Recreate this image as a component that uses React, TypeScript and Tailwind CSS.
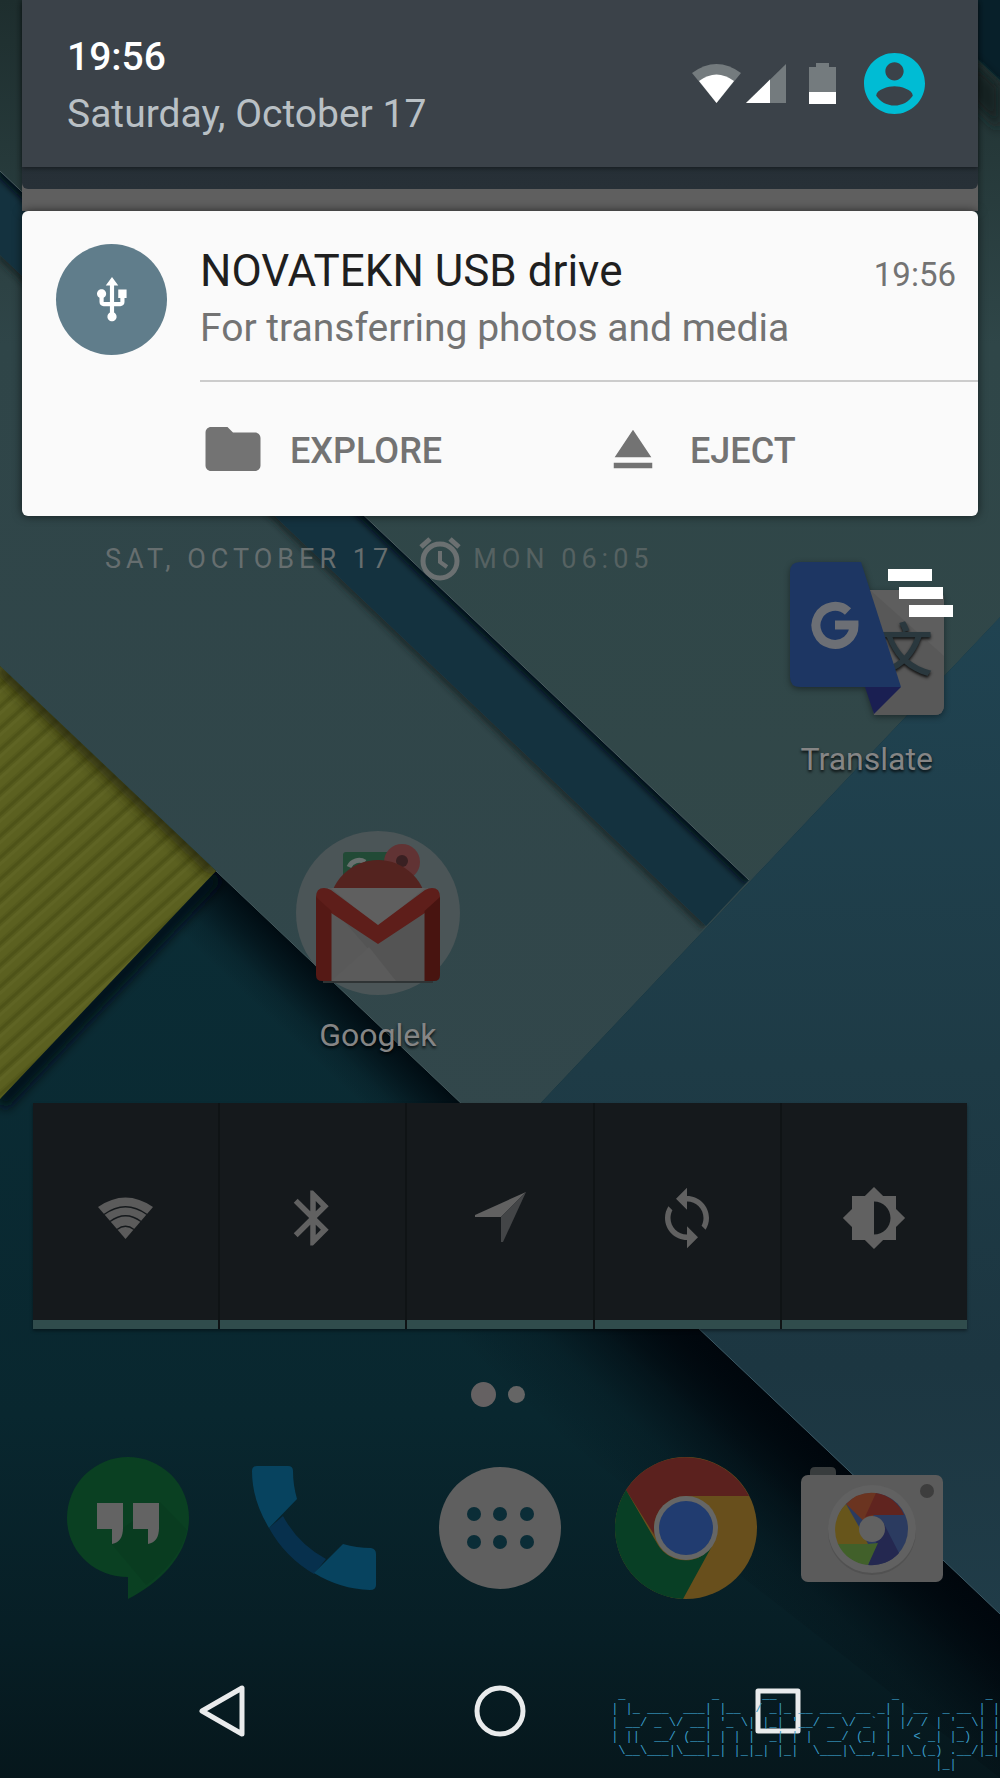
import React from "react";

const SYNC =
  "M12 4V1L8 5l4 4V6c3.31 0 6 2.69 6 6 0 1.01-.25 1.97-.7 2.8l1.46 1.46C19.54 15.03 20 13.57 20 12c0-4.42-3.58-8-8-8zm0 14c-3.31 0-6-2.69-6-6 0-1.01.25-1.97.7-2.8L5.24 7.74C4.46 8.97 4 10.43 4 12c0 4.42 3.58 8 8 8v3l4-4-4-4v3z";
const BRIGHTNESS =
  "M20 15.31L23.31 12 20 8.69V4h-4.69L12 .69 8.69 4H4v4.69L.69 12 4 15.31V20h4.69L12 23.31 15.31 20H20v-4.69zM12 18V6c3.31 0 6 2.69 6 6s-2.69 6-6 6z";
const BLUETOOTH =
  "M17.71 7.71L12 2h-1v7.59L6.41 5 5 6.41 10.59 12 5 17.59 6.41 19 11 14.41V22h1l5.71-5.71-4.3-4.29 4.3-4.29zM13 5.83l1.88 1.88L13 9.59V5.83zm1.88 10.46L13 18.17v-3.76l1.88 1.88z";
const FOLDER =
  "M10 4H4c-1.1 0-1.99.9-1.99 2L2 18c0 1.1.9 2 2 2h16c1.1 0 2-.9 2-2V8c0-1.1-.9-2-2-2h-8l-2-2z";
const EJECT = "M5 17h14v2H5zm7-12L5.33 15h13.34z";
const ACCOUNT =
  "M12 2C6.48 2 2 6.48 2 12s4.48 10 10 10 10-4.48 10-10S17.52 2 12 2zm0 3c1.66 0 3 1.34 3 3s-1.34 3-3 3-3-1.34-3-3 1.34-3 3-3zm0 14.2c-2.5 0-4.71-1.28-6-3.22.03-1.99 4-3.08 6-3.08 1.99 0 5.97 1.09 6 3.08-1.29 1.94-3.5 3.22-6 3.22z";
const USB =
  "M15 7v4h1v2h-3V5h2l-3-4-3 4h2v8H8v-2.07c.7-.37 1.2-1.08 1.2-1.93 0-1.21-.99-2.2-2.2-2.2-1.21 0-2.2.99-2.2 2.2 0 .85.5 1.56 1.2 1.93V13c0 1.11.89 2 2 2h3v3.05c-.71.37-1.2 1.1-1.2 1.95 0 1.22.99 2.2 2.2 2.2 1.21 0 2.2-.98 2.2-2.2 0-.85-.49-1.58-1.2-1.95V15h3c1.11 0 2-.89 2-2v-2h1V7h-4z";

const BANNER = [
  " _            _      __                _            _ ",
  "| |_ ___  ___| |__  / _|_ __ ___  __ _| | __  _ __ | |",
  "| __/ _ \\/ __| '_ \\| |_| '__/ _ \\/ _` | |/ / | '_ \\| |",
  "| ||  __/ (__| | | |  _| | |  __/ (_| |   < _| |_) | |",
  " \\__\\___|\\___|_| |_|_| |_|  \\___|\\__,_|_|\\_(_) .__/|_|",
  "                                             |_|      ",
].join("\n");

function Wallpaper() {
  return (
    <svg
      className="absolute inset-0 h-full w-full"
      viewBox="0 0 1000 1778"
      preserveAspectRatio="xMidYMid slice"
      aria-hidden="true"
    >
      <defs>
        <linearGradient id="deep" x1="0" y1="870" x2="0" y2="1778" gradientUnits="userSpaceOnUse">
          <stop offset="0" stopColor="#0b2d36" />
          <stop offset="0.6" stopColor="#09272f" />
          <stop offset="0.85" stopColor="#071e25" />
          <stop offset="1" stopColor="#06171c" />
        </linearGradient>
        <linearGradient id="paper" x1="0" y1="0" x2="0" y2="1150" gradientUnits="userSpaceOnUse">
          <stop offset="0" stopColor="#1e2e2e" />
          <stop offset="0.14" stopColor="#293c3c" />
          <stop offset="0.3" stopColor="#2f4548" />
          <stop offset="1" stopColor="#32474b" />
        </linearGradient>
        <linearGradient id="paperRight" x1="0" y1="0" x2="0" y2="1150" gradientUnits="userSpaceOnUse">
          <stop offset="0" stopColor="#1e2e2e" />
          <stop offset="0.3" stopColor="#2f4648" />
          <stop offset="1" stopColor="#334849" />
        </linearGradient>
        <linearGradient id="sea" x1="0" y1="617" x2="0" y2="1614" gradientUnits="userSpaceOnUse">
          <stop offset="0" stopColor="#204351" />
          <stop offset="0.45" stopColor="#1e3b46" />
          <stop offset="0.75" stopColor="#1c3641" />
          <stop offset="1" stopColor="#203c48" />
        </linearGradient>
        <linearGradient id="fadeNarrow" x1="463" y1="1104" x2="415" y2="1155" gradientUnits="userSpaceOnUse">
          <stop offset="0" stopColor="#000a10" stopOpacity="0.95" />
          <stop offset="0.35" stopColor="#000a10" stopOpacity="0.6" />
          <stop offset="0.7" stopColor="#000a10" stopOpacity="0.18" />
          <stop offset="1" stopColor="#000a10" stopOpacity="0" />
        </linearGradient>
        <linearGradient id="fadeWide" x1="463" y1="1104" x2="342" y2="1232" gradientUnits="userSpaceOnUse">
          <stop offset="0" stopColor="#00060c" stopOpacity="0.95" />
          <stop offset="0.3" stopColor="#00060c" stopOpacity="0.7" />
          <stop offset="0.65" stopColor="#00060c" stopOpacity="0.2" />
          <stop offset="1" stopColor="#00060c" stopOpacity="0" />
        </linearGradient>
        <pattern
          id="ribs"
          width="400"
          height="16"
          patternUnits="userSpaceOnUse"
          patternTransform="translate(0 1099) rotate(-42)"
        >
          <rect width="400" height="16" fill="#5b6020" />
          <rect y="0" width="400" height="3" fill="#5f6424" />
          <rect y="9" width="400" height="2" fill="#565b1d" />
          <rect y="11" width="400" height="3" fill="#4e5318" />
          <rect y="14" width="400" height="2" fill="#565b1d" />
        </pattern>
        <clipPath id="deepClip">
          <path d="M0 666L1000 1614V1778H0z" />
        </clipPath>
        <clipPath id="yellowClip">
          <path d="M0 666L216 871L0 1099z" />
        </clipPath>
        <clipPath id="bandClip">
          <path d="M0 171L749 880L706 926L0 255z" />
        </clipPath>
        <clipPath id="lowerPaperClip">
          <path d="M0 255L706 926L503 1143L0 666z" />
        </clipPath>
        <filter id="softSmall" x="-20%" y="-20%" width="140%" height="140%">
          <feGaussianBlur stdDeviation="6" />
        </filter>
        <filter id="softEdge" x="-20%" y="-20%" width="140%" height="140%">
          <feGaussianBlur stdDeviation="3" />
        </filter>
      </defs>
      <rect width="1000" height="1778" fill="url(#deep)" />
      <g clipPath="url(#deepClip)">
        <path d="M120 780L1000 1614V1778H120z" fill="url(#fadeNarrow)" />
        <path d="M540 1178L1000 1614V1778L400 1310z" fill="url(#fadeWide)" />
        <path d="M0 1104L216 876" stroke="#020f14" strokeWidth="16" filter="url(#softSmall)" />
      </g>
      <path d="M0 0H1000V617L503 1143L0 666z" fill="url(#paper)" />
      <path d="M0 171V0H1000V617L749 880z" fill="url(#paperRight)" />
      <g clipPath="url(#lowerPaperClip)">
        <path d="M0 255L706 926" stroke="#182424" strokeWidth="8" opacity="0.8" filter="url(#softEdge)" />
      </g>
      <path d="M0 171L749 880L706 926L0 255z" fill="#14323f" />
      <g clipPath="url(#bandClip)">
        <path d="M0 171L749 880" stroke="#020c12" strokeWidth="10" filter="url(#softEdge)" />
      </g>
      <path d="M0 171L749 880" stroke="#4c5d60" strokeWidth="1" />
      <path d="M1000 617L503 1143L1000 1614z" fill="url(#sea)" />
      <path d="M503 1143L1000 1614" stroke="#3c5864" strokeWidth="1" />
      <path d="M216 871L503 1143" stroke="#46595c" strokeWidth="1" />
      <path d="M0 666L216 871L0 1099z" fill="url(#ribs)" />
      <g clipPath="url(#yellowClip)">
        <path d="M0 666L216 871" stroke="#252708" strokeWidth="16" opacity="0.8" filter="url(#softSmall)" />
      </g>
      <path d="M970 0H1000V80L970 52z" fill="#08202a" />
      <path d="M970 58L1000 86V130L970 100z" fill="#142424" filter="url(#softSmall)" />
    </svg>
  );
}

function StatusIcons() {
  return (
    <div className="flex items-center">
      <svg className="h-10 w-[49px]" viewBox="0 0 49 40" role="img" aria-label="Wi-Fi">
        <path d="M0 9Q24.500 -9 49 9L24.500 39z" fill="#747b7e" />
        <path d="M7 17Q24.500 4 42 17L24.500 39z" fill="#fff" />
      </svg>
      <svg className="ml-[5px] h-10 w-10" viewBox="0 0 40 40" role="img" aria-label="Mobile signal">
        <path d="M40 0V39H0z" fill="#747b7e" />
        <path d="M24 15.600V39H0z" fill="#fff" />
      </svg>
      <svg className="ml-[23px] h-[41px] w-[27px]" viewBox="0 0 27 41" role="img" aria-label="Battery">
        <path d="M7 0H20V4H27V41H0V4H7z" fill="#747b7e" />
        <path d="M0 29H27V41H0z" fill="#fff" />
      </svg>
      <button type="button" aria-label="User profile" className="ml-7">
        <svg className="size-[61px]" viewBox="2 2 20 20" fill="#00bcd4">
          <path d={ACCOUNT} />
        </svg>
      </button>
    </div>
  );
}

function NotificationAction({ path, label }: { path: string; label: string }) {
  return (
    <button type="button" className="flex flex-1 items-center gap-6 text-[36px] leading-10 font-medium text-[#737373]">
      <svg className="size-[66px]" viewBox="0 0 24 24" fill="currentColor" aria-hidden="true">
        <path d={path} />
      </svg>
      <span className="pt-1">{label}</span>
    </button>
  );
}

function Shade() {
  return (
    <section className="relative z-10 mx-[22px]" aria-label="Notifications">
      <div className="bg-[#5f5f5f] pb-[22px] shadow-[0_0_8px_rgba(0,0,0,0.5)]">
        <div className="rounded-b-md bg-linear-to-b from-[#202a31] to-[#273037] pb-[22px]">
          <header className="flex h-[167px] items-center justify-between bg-[#3b4249] pr-[53px] pl-[45px] shadow-[0_2px_4px_rgba(0,0,0,0.35)]">
            <div className="pt-1">
              <div className="text-[39px] leading-[56px] font-medium text-white">19:56</div>
              <div className="text-[39px] leading-[58px] text-[#b9c0c5]">Saturday, October 17</div>
            </div>
            <StatusIcons />
          </header>
        </div>
      </div>
      <article className="flex h-[305px] rounded-md bg-[#fafafa] shadow-[0_0_10px_rgba(0,0,0,0.6)]">
        <div className="w-[178px] shrink-0 pt-[33px] pl-[34px]">
          <div className="flex size-[111px] items-center justify-center rounded-full bg-[#607d8b]">
            <svg className="size-[50px]" viewBox="0 0 24 24" fill="#fff" aria-hidden="true">
              <path d={USB} />
            </svg>
          </div>
        </div>
        <div className="flex min-w-0 flex-1 flex-col">
          <div className="flex h-[171px] flex-col border-b-2 border-[#cccccc] pt-8 pr-[22px]">
            <div className="flex items-baseline justify-between">
              <h1 className="text-[44px] leading-[56px] text-[#1f1f1f]">NOVATEKN USB drive</h1>
              <time className="text-[33px] leading-[56px] text-[#737373]">19:56</time>
            </div>
            <p className="text-[39px] leading-[50px] text-[#737373]">For transferring photos and media</p>
          </div>
          <div className="flex flex-1 items-center gap-[22px]">
            <NotificationAction path={FOLDER} label="EXPLORE" />
            <NotificationAction path={EJECT} label="EJECT" />
          </div>
        </div>
      </article>
    </section>
  );
}

function TranslateIcon() {
  return (
    <svg className="h-[158px] w-[154px] drop-shadow-[0_2px_3px_rgba(0,0,0,0.4)]" viewBox="0 0 154 158" aria-hidden="true">
      <path d="M70 29H144Q154 29 154 39V144Q154 154 144 154H84z" fill="#5e5e5e" />
      <path d="M80 29L154 95V144Q154 154 144 154H84z" fill="#585858" />
      <text x="85" y="110" fontSize="58" fontWeight="500" fill="#2a383e" fontFamily="'Noto Sans CJK SC', sans-serif">
        文
      </text>
      <path d="M10 1H71L111 126H10Q0 126 0 116V11Q0 1 10 1z" fill="#1d3663" />
      <path d="M75 126H111L84 153z" fill="#1a1f52" />
      <path d="M58 50.500A19 19 0 1 0 64 64H45" fill="none" stroke="#6c6f75" strokeWidth="9" />
    </svg>
  );
}

function FolderIcon() {
  return (
    <svg className="h-[164px] w-[164px]" viewBox="1 0 164 164" aria-hidden="true">
      <circle cx="83" cy="82" r="82" fill="#4b5557" />
      <rect x="48" y="21" width="60" height="50" rx="3" fill="#224a36" />
      <path d="M54 36A11 11 0 0 1 70 31" fill="none" stroke="#68706e" strokeWidth="5" />
      <circle cx="107" cy="31" r="18" fill="#613334" />
      <circle cx="107" cy="30" r="6" fill="#392022" />
      <circle cx="83" cy="78" r="49" fill="#54231f" />
      <path d="M33 57H133V150H33z" fill="#595959" />
      <path d="M36 75L83 113L130 75V150H101z" fill="#545454" />
      <path d="M36 150L74 116L101 150z" fill="#5b5b5b" />
      <path d="M36 57H130L83 96z" fill="#5f5f5f" />
      <path d="M21 66Q21 57 29 57Q32 57 36 59L83 94L130 59Q134 57 137 57Q145 57 145 66V72L83 113L21 72z" fill="#5e1e1a" />
      <path d="M21 66L36.500 80V150H27Q21 150 21 144z" fill="#551915" />
      <path d="M145 66L129.500 80V150H139Q145 150 145 144z" fill="#481410" />
      <path d="M28 151H138" stroke="#2f3435" strokeWidth="2" />
    </svg>
  );
}

function AppShortcut({ label, children, className }: { label: string; children: React.ReactNode; className: string }) {
  return (
    <div className={className}>
      <button
        type="button"
        className="flex flex-col items-center text-[32px] leading-10 text-[#858585] [text-shadow:0_2px_3px_rgba(0,0,0,0.8)]"
      >
        {children}
        <span className="mt-5">{label}</span>
      </button>
    </div>
  );
}

function AlarmIcon() {
  return (
    <svg className="mr-3 ml-[26px] h-[44px] w-[42px]" viewBox="0 0 42 44" fill="none" stroke="#6b7071" aria-hidden="true">
      <circle cx="21" cy="24" r="17" strokeWidth="5" />
      <path d="M21 14V25L28 30" strokeWidth="4" />
      <path d="M2 10L11 2M40 10L31 2" strokeWidth="5" />
    </svg>
  );
}

function HomeScreen() {
  return (
    <section className="relative px-[11px]" aria-label="Home screen">
      <div className="grid grid-cols-4">
        <div className="col-span-3 flex items-center self-start pt-[21px] pl-[94px] text-[27px] leading-[42px] tracking-[5px] whitespace-nowrap text-[#666e6f]">
          <span>SAT, OCTOBER 17</span>
          <AlarmIcon />
          <span className="text-[#566262]">MON 06:05</span>
        </div>
        <AppShortcut label="Translate" className="flex h-[315px] justify-center pt-[45px]">
          <TranslateIcon />
        </AppShortcut>
        <AppShortcut label="Googlek" className="col-start-2 flex h-[272px] justify-center">
          <FolderIcon />
        </AppShortcut>
      </div>
      <button type="button" aria-label="Clear all notifications" className="absolute top-[53px] right-[47px] z-10">
        <svg className="h-12 w-[65px]" viewBox="0 0 65 48" fill="#fff">
          <path d="M0 0H44V12H0zM11 18H55V30H11zM21 36H65V48H21z" />
        </svg>
      </button>
    </section>
  );
}

function WidgetWifi() {
  return (
    <svg className="h-[42px] w-[55px]" viewBox="0 0 55 42" aria-hidden="true">
      <path d="M0 10Q27.500 -9 55 10L27.500 42z" fill="#5b5b5b" />
      <path
        d="M6 17.500Q27.500 2 49 17.500M12 24.500Q27.500 13 43 24.500M19 32.500Q27.500 26 36 32.500"
        fill="none"
        stroke="#15191c"
        strokeWidth="1.500"
      />
    </svg>
  );
}

function WidgetLocation() {
  return (
    <svg className="h-[52px] w-[52px]" viewBox="0 0 52 52" aria-hidden="true">
      <path d="M52 0L1 23V25H27z" fill="#616161" />
      <path d="M52 0L27 25V50H29z" fill="#434547" />
    </svg>
  );
}

function MaterialIcon({ path }: { path: string }) {
  return (
    <svg className="size-[66px]" viewBox="0 0 24 24" fill="#616161" aria-hidden="true">
      <path d={path} />
    </svg>
  );
}

function PowerWidget() {
  const toggles = [
    { label: "Wi-Fi", icon: <WidgetWifi /> },
    { label: "Bluetooth", icon: <MaterialIcon path={BLUETOOTH} /> },
    { label: "Location", icon: <WidgetLocation /> },
    { label: "Sync", icon: <MaterialIcon path={SYNC} /> },
    { label: "Brightness", icon: <MaterialIcon path={BRIGHTNESS} /> },
  ];
  return (
    <section
      className="relative mx-[33px] grid h-[226px] grid-cols-5 gap-[2px] bg-[#0f1315] shadow-[0_2px_3px_rgba(0,0,0,0.4)]"
      aria-label="Power controls"
    >
      {toggles.map((t) => (
        <button
          key={t.label}
          type="button"
          aria-label={t.label}
          className="flex items-center justify-center border-b-[9px] border-[#304c4c] bg-[#15191c] pt-3"
        >
          {t.icon}
        </button>
      ))}
    </section>
  );
}

function HangoutsIcon() {
  return (
    <svg className="h-[144px] w-[124px]" viewBox="0 0 124 144" aria-hidden="true">
      <path d="M62 1A61 61 0 0 0 1 62C1 95 28 121 62 121V143C95 126 123 98 123 62A61 61 0 0 0 62 1z" fill="#0a4022" />
      <path d="M57 72L94 46L121 74C116 96 100 115 80 129L44 86z" fill="#08371d" opacity="0.4" />
      <path d="M31 47H57V72Q57 86 46 88V73H31zM67 47H93V72Q93 86 82 88V73H67z" fill="#636363" />
    </svg>
  );
}

function PhoneIcon() {
  return (
    <svg className="h-[126px] w-[126px]" viewBox="0 0 126 126" aria-hidden="true">
      <path d="M32 51Q47 79 75 94L63 109Q34 92 18 63z" fill="#07304d" />
      <path d="M6 1H37Q42 1 42 6Q42 20 46 34L18 63Q1 35 1 6Q1 1 6 1z" fill="#07435f" />
      <path d="M63 108L92 79Q106 83 120 83Q125 84 125 89V120Q125 125 119 125Q89 124 63 108z" fill="#07435f" />
    </svg>
  );
}

function AppsIcon() {
  const xs = [35, 61, 88];
  const ys = [47, 75];
  return (
    <svg className="h-[122px] w-[122px]" viewBox="0 0 122 122" aria-hidden="true">
      <circle cx="61" cy="61" r="61" fill="#5f5f5f" />
      {ys.map((y) => xs.map((x) => <circle key={`${x}-${y}`} cx={x} cy={y} r="7" fill="#0b2d37" />))}
    </svg>
  );
}

function ChromeIcon() {
  return (
    <svg className="h-[144px] w-[144px]" viewBox="0 0 144 144" aria-hidden="true">
      <circle cx="72" cy="72" r="71" fill="#684f1c" />
      <path d="M12 34A71 71 0 0 1 135 40H72A32 32 0 0 0 41 80z" fill="#5b211e" />
      <path d="M12 34L44 89A32 32 0 0 0 98 90L69 143A71 71 0 0 1 12 34z" fill="#083f25" />
      <circle cx="72" cy="72" r="32" fill="#656666" />
      <circle cx="72" cy="72" r="27" fill="#213c70" />
    </svg>
  );
}

function CameraIcon() {
  return (
    <svg className="h-[126px] w-[144px]" viewBox="0 0 144 126" aria-hidden="true">
      <path d="M10 12V7Q10 2 15 2H31Q36 2 36 7V12z" fill="#383c3d" />
      <rect x="1" y="10" width="142" height="107" rx="7" fill="#5b5b5b" />
      <circle cx="127" cy="26" r="7" fill="#3d3d3d" />
      <circle cx="72" cy="66" r="44" fill="#515151" />
      <circle cx="72" cy="64" r="44" fill="#616161" />
      <circle cx="72" cy="64" r="36" fill="#2b3b60" />
      <path d="M72 64L46 39A36 36 0 0 1 76 28z" fill="#6b3420" />
      <path d="M65 52L76 28A36 36 0 0 1 104 50H72z" fill="#60241f" />
      <path d="M83 57L99 88A36 36 0 0 1 68 100L76 78z" fill="#242850" />
      <path d="M78 78L68 100A36 36 0 0 1 38 79H68z" fill="#41602a" />
      <path d="M68 79H38A36 36 0 0 1 46 39L62 67z" fill="#67551b" />
      <circle cx="72" cy="64" r="13" fill="#616161" />
    </svg>
  );
}

function Dock() {
  const apps = [
    { label: "Hangouts", icon: <HangoutsIcon /> },
    { label: "Phone", icon: <PhoneIcon /> },
    { label: "All apps", icon: <AppsIcon /> },
    { label: "Chrome", icon: <ChromeIcon /> },
    { label: "Camera", icon: <CameraIcon /> },
  ];
  return (
    <section className="relative px-[35px]" aria-label="Favorites">
      <div className="flex h-[127px] items-center justify-center gap-3 pt-1 pr-1">
        <span className="size-[25px] rounded-full bg-[#656162]" />
        <span className="size-[17px] rounded-full bg-[#656565]" />
      </div>
      <div className="grid h-[144px] grid-cols-5">
        {apps.map((a) => (
          <button key={a.label} type="button" aria-label={a.label} className="flex items-center justify-center">
            {a.icon}
          </button>
        ))}
      </div>
    </section>
  );
}

function NavigationBar() {
  return (
    <nav className="relative mt-auto grid h-[134px] grid-cols-3 px-[83px]" aria-label="System navigation">
      <button type="button" aria-label="Back" className="flex items-center justify-center">
        <svg className="size-[54px]" viewBox="0 0 54 54" fill="none" stroke="#e9ebec" strokeWidth="5" strokeLinejoin="round">
          <path d="M7 27L47 4V50z" />
        </svg>
      </button>
      <button type="button" aria-label="Home" className="flex items-center justify-center">
        <svg className="size-[54px]" viewBox="0 0 54 54" fill="none" stroke="#e9ebec" strokeWidth="5">
          <circle cx="27" cy="27" r="23" />
        </svg>
      </button>
      <button type="button" aria-label="Recent apps" className="flex items-center justify-center">
        <svg className="size-[54px]" viewBox="0 0 54 54" fill="none" stroke="#e9ebec" strokeWidth="5" strokeLinejoin="round">
          <rect x="7" y="7" width="40" height="40" />
        </svg>
      </button>
      <pre
        aria-label="techfreak.pl"
        className="pointer-events-none absolute right-0 bottom-[6px] font-['Liberation_Mono',monospace] text-[12px] leading-[14px] text-[#3a9cc8]"
      >
        {BANNER}
      </pre>
    </nav>
  );
}

export default function App() {
  return (
    <main className="relative flex min-h-screen flex-col overflow-hidden bg-[#08252e] font-[Roboto,sans-serif]">
      <Wallpaper />
      <Shade />
      <HomeScreen />
      <PowerWidget />
      <Dock />
      <NavigationBar />
    </main>
  );
}
